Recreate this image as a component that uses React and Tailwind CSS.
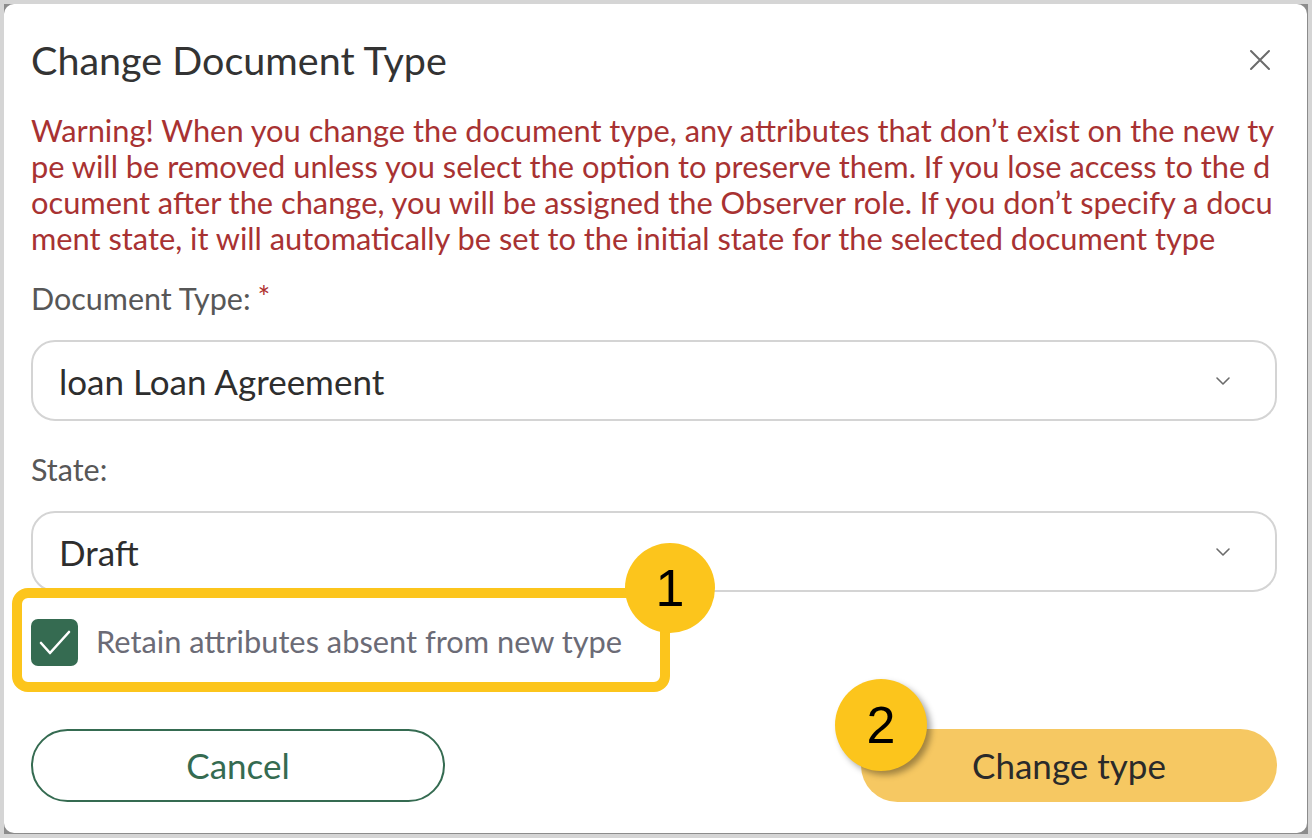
import React from "react";

const font = { fontFamily: "Lato, 'Open Sans', sans-serif" };

function Chevron() {
  return (
    <svg width="16" height="10" viewBox="0 0 16 10" fill="none">
      <path d="M2 2l6 6 6-6" stroke="#6b6b6b" strokeWidth="1.6" strokeLinecap="round" strokeLinejoin="round" />
    </svg>
  );
}

function SelectBox({ value }) {
  return (
    <div className="flex h-[81px] items-center justify-between rounded-[24px] border-2 border-[#d4d4d4] bg-white pl-[26px] pr-[44px]">
      <span className="text-[35px] leading-[44px] text-[#2e2e2e]">{value}</span>
      <Chevron />
    </div>
  );
}

export default function App() {
  return (
    <div className="h-[838px] w-[1312px] bg-[#d5d5d5] pl-[4px] pt-[4px]" style={font}>
      <div className="h-[830px] w-[1304px] bg-[#8c8c8c]">
        <div className="relative h-[829px] w-[1303px] rounded-[10px] bg-white pl-[27px] pr-[30px] pt-[32px]">
          {/* header */}
          <div className="flex h-[48px] items-center justify-between">
            <h1 className="text-[39.5px] leading-[48px] text-[#333333]">Change Document Type</h1>
            <svg width="24" height="24" viewBox="0 0 24 24" className="mr-[5px]" fill="none">
              <path d="M3 3l18 18M21 3L3 21" stroke="#6b6b6b" strokeWidth="2" strokeLinecap="round" />
            </svg>
          </div>

          {/* warning */}
          <p className="mt-[29px] break-all text-[30.8px] leading-[36px] text-[#a83232]">
            Warning! When you change the document type, any attributes that don’t exist on the new type will be removed unless you select the option to preserve them. If you lose access to the document after the change, you will be assigned the Observer role. If you don’t specify a document state, it will automatically be set to the initial state for the selected document type
          </p>

          {/* document type */}
          <div className="mt-[24px] flex h-[36px] items-center text-[30.5px] text-[#575757]">
            Document Type:
            <span className="ml-[7px] self-start text-[30px] leading-[30px] text-[#b03030]">*</span>
          </div>
          <div className="mt-[23px]">
            <SelectBox value="loan Loan Agreement" />
          </div>

          {/* state */}
          <div className="mt-[31px] flex h-[36px] items-center text-[30.5px] text-[#575757]">State:</div>
          <div className="mt-[23px]">
            <SelectBox value="Draft" />
          </div>

          {/* retain checkbox */}
          <div className="mt-[27px] flex h-[47px] items-center gap-[18px]">
            <div className="flex h-[47px] w-[47px] shrink-0 items-center justify-center rounded-[7px] bg-[#356b51]">
              <svg width="34" height="30" viewBox="0 0 34 30" fill="none">
                <path d="M3 15l9 10L31 4" stroke="white" strokeWidth="2.6" strokeLinecap="round" strokeLinejoin="round" />
              </svg>
            </div>
            <span className="text-[30.8px] text-[#6b6b76]">Retain attributes absent from new type</span>
          </div>

          {/* actions */}
          <div className="mt-[63px] flex items-center justify-between">
            <button className="flex h-[73px] w-[414px] items-center justify-center rounded-full border-2 border-[#356b51] text-[35px] text-[#356b51]">
              Cancel
            </button>
            <button className="flex h-[73px] w-[416px] items-center justify-center rounded-full bg-[#f6c862] text-[35px] text-[#2a2a2a]">
              Change type
            </button>
          </div>

          {/* callout annotations */}
          <div className="absolute left-[8px] top-[584px] h-[104px] w-[658px] rounded-[16px] border-[10px] border-[#fcc51c]" />
          <div className="absolute left-[621px] top-[539px] flex h-[90px] w-[90px] items-center justify-center rounded-full bg-[#fcc51c] text-[52px] text-black" style={{ fontFamily: "'Liberation Sans', Arial, sans-serif" }}>
            1
          </div>
          <div className="absolute left-[831px] top-[675px] flex h-[92px] w-[92px] items-center justify-center rounded-full bg-[#fcc51c] text-[52px] text-black shadow-[4px_4px_6px_rgba(0,0,0,0.35)]" style={{ fontFamily: "'Liberation Sans', Arial, sans-serif" }}>
            2
          </div>
        </div>
      </div>
    </div>
  );
}
